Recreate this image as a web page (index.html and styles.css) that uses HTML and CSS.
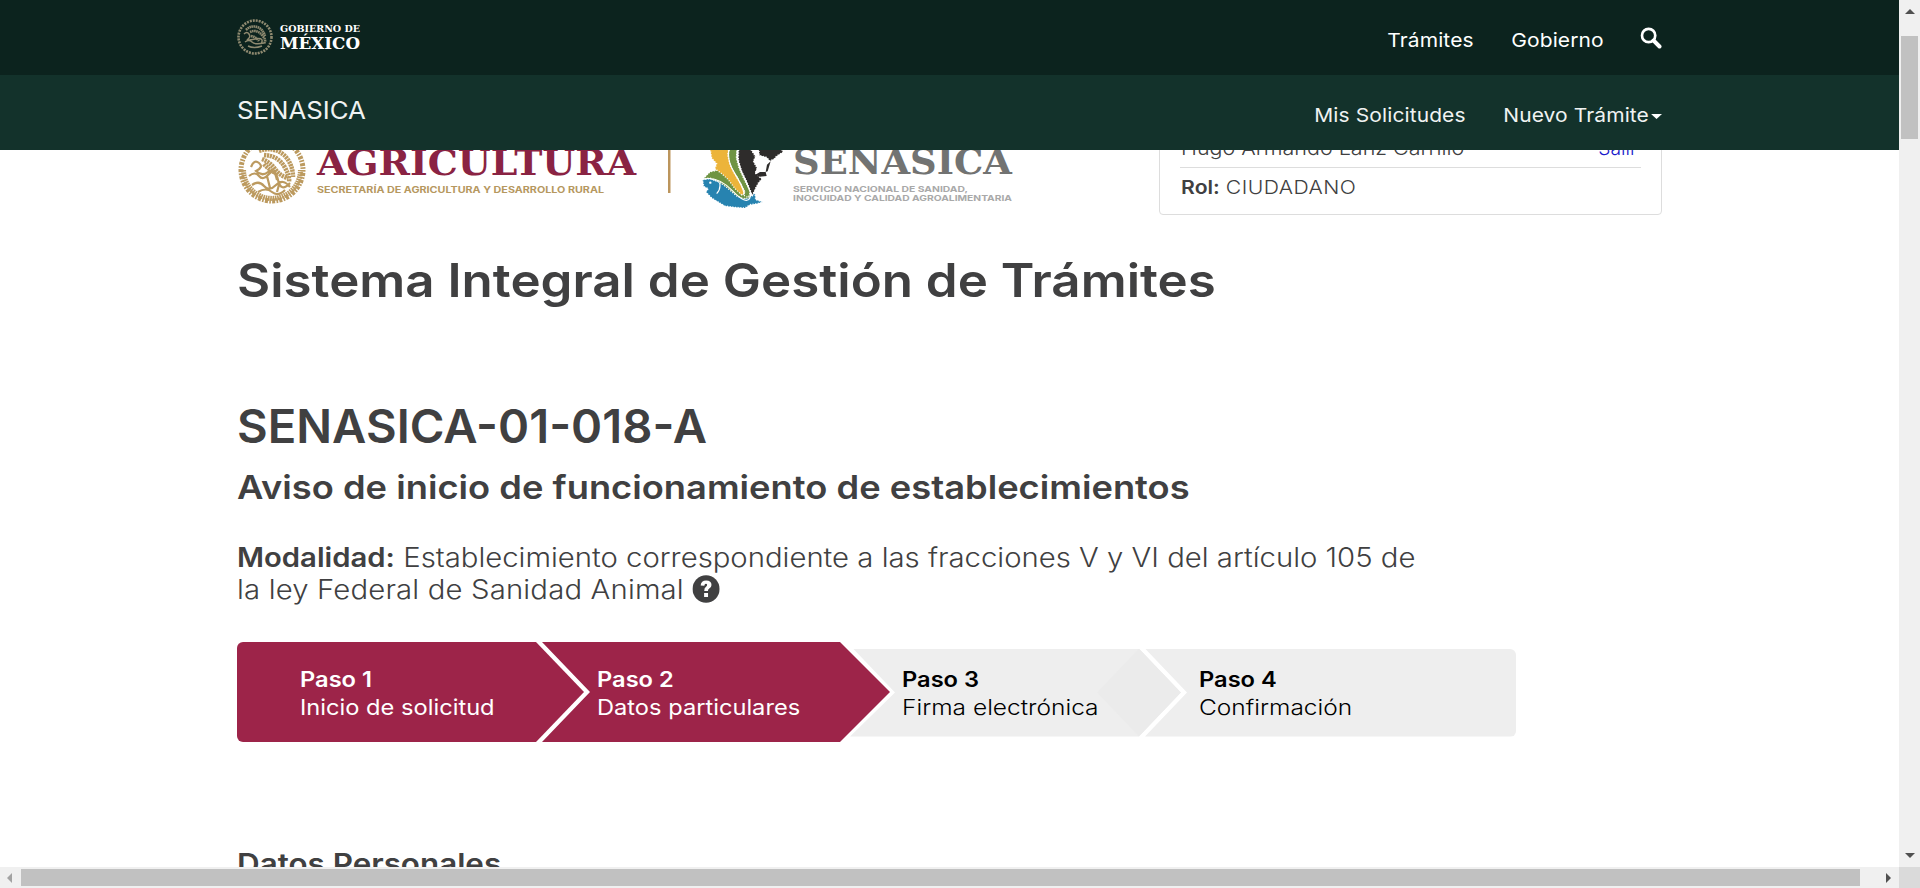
FILE: index.html
```
<!DOCTYPE html>
<html lang="es">
<head>
<meta charset="utf-8">
<title>Sistema Integral de Gestión de Trámites</title>
<link rel="stylesheet" href="styles.css">
</head>
<body>
<div class="window">
<div class="page">
  <header>
    <div class="bar bar-gob">
      <svg class="gob-logo" width="126" height="40" viewBox="0 0 126 40">
        <g fill="none" stroke="#8f8a70">
          <circle cx="18" cy="20" r="16.5" stroke-width="2.6" stroke-dasharray="2 1"/>
          <path stroke-width="2.6" stroke-dasharray="1.6 .5" d="M9 13q5-5 11-3t8 9M13 15q7-3 12 3t2 8M14 19q5 1 8 5"/>
          <path stroke-width="1.5" d="M7 17q3-3 5 0t-1 5 7 0 6 5M8 25q4-3 7 0t12 1M11 29q6 3 14 0"/>
        </g>
        <g class="serif" fill="#fff"><text x="43" y="15" font-size="9.6" textLength="80" lengthAdjust="spacingAndGlyphs">GOBIERNO DE</text>
        <text x="43" y="32" font-size="16.5" textLength="80" lengthAdjust="spacingAndGlyphs">MÉXICO</text></g>
      </svg>
      <nav><a>Trámites</a><a>Gobierno</a>
        <svg class="search" width="20" height="22" viewBox="0 0 22 22" preserveAspectRatio="none" fill="none" stroke="#fff"><circle cx="8.5" cy="8.500" r="6.700" stroke-width="2.700"/><path d="M13.500 13.500l6 6" stroke-width="4" stroke-linecap="round"/></svg></nav>
    </div>
    <div class="bar bar-app">
      <a class="brand">SENASICA</a>
      <nav><a>Mis Solicitudes</a><a>Nuevo Trámite<i class="caret"></i></a></nav>
    </div>
  </header>
  <main>
    <div class="top">
      <svg class="logos" width="790" height="90" viewBox="235 125 790 90">
        <g fill="none" stroke="#bc9a5f">
          <circle cx="272" cy="170" r="31" stroke-width="5" stroke-dasharray="1.6 1.3 3 1.200"/>
          <path stroke-width="6" stroke-dasharray="2 .8" d="M238.500 170a33.500 33.500 0 0 0 67 0" transform="translate(40.800 25.500) scale(.85)"/>
          <path stroke-width="4.500" stroke-dasharray="2.200 .7" d="M259 151q14-5 25 4 9 9 9 22M264 155q14 1 20 11t5 16M262 159q8 3 13 10t13 9M264 164q5 6 12 9"/>
          <path stroke-width="2.200" d="M251 167q3-8 8-4t-3 8q6 6 12 1t9 8M249 176q6-5 10 0t10-2 9 6 12 3M252 185q7-5 12 1t12-1 14 2M258 192q8-5 14 0t13-2M267 176l3 12M280 181l-3 11"/>
        </g>
        <g class="serif"><text x="317" y="175" font-size="35" fill="#8a2343" textLength="319" lengthAdjust="spacingAndGlyphs">AGRICULTURA</text>
        <text x="793" y="174" font-size="35" fill="#727372" textLength="219" lengthAdjust="spacingAndGlyphs">SENASICA</text></g>
        <g class="small"><text x="317" y="193" font-size="8.600" fill="#b6985f" textLength="287" lengthAdjust="spacingAndGlyphs">SECRETARÍA DE AGRICULTURA Y DESARROLLO RURAL</text>
        <text x="793" y="192" font-size="8.200" fill="#a9a9a9" textLength="175" lengthAdjust="spacingAndGlyphs">SERVICIO NACIONAL DE SANIDAD,</text>
        <text x="793" y="201" font-size="8.200" fill="#a9a9a9" textLength="219" lengthAdjust="spacingAndGlyphs">INOCUIDAD Y CALIDAD AGROALIMENTARIA</text></g>
        <path fill="#bc955c" d="M668 140h2.500v53h-2.500z"/>
        <g transform="translate(695 148) scale(.3333)" stroke="#fff" stroke-width="4" stroke-dasharray="3 5">
          <path fill="#2783b0" d="M23 95L45 92 60 98 80 106 100 120 125 140 150 152 165 148 180 136 182 155 203 162 185 167 165 170 150 180 120 178 90 174 70 162 50 150 33 132 40 122 26 115z"/>
          <path fill="#6f9443" d="M25 92L45 72 70 66 95 80 115 105 140 140 165 138 162 150 145 152 125 144 95 118 70 100 45 90z"/>
          <path fill="#6f9443" d="M105 0H127L124 30 132 60 150 100 167 130 160 148 146 142 148 128 128 90 110 65 95 35z"/>
          <path fill="#ecb43a" d="M45 0H102L98 20 105 50 120 80 140 112 150 135 140 141 120 122 100 95 80 77 60 62 65 47 50 30z"/>
          <path fill="#2e2c2b" d="M131 0H165L181 25 175 40 186 60 180 75 200 93 190 105 182 120 172 142 165 125 155 100 140 70 130 35z"/>
          <path fill="#2e2c2b" d="M191 0H258L264 12 245 24 238 32 225 39 215 28 193 22z"/>
          <path fill="#2e2c2b" stroke="none" d="M227 40L221 60 218 70 212 72 216 50zM180 81L195 72 212 72 215 84 195 86z"/>
          <path fill="none" stroke-width="3.500" stroke-dasharray="none" d="M103 0Q94 35 118 74T148 138M128 0Q120 30 146 86T166 140M25 93Q70 84 112 128T165 150M74 105q4 18-9 32"/>
          <circle cx="46" cy="104" r="3.500" fill="#fff" stroke="none"/>
        </g>
      </svg>
      <div class="user">
        <div class="user-name"><span>Hugo Armando Lanz Carrillo</span><a>Salir</a></div>
        <div class="user-role"><b>Rol:</b> <span>CIUDADANO</span></div>
      </div>
    </div>
    <h1>Sistema Integral de Gestión de Trámites</h1>
    <h2>SENASICA-01-018-A</h2>
    <h3>Aviso de inicio de funcionamiento de establecimientos</h3>
    <p class="mode"><b>Modalidad:</b> Establecimiento correspondiente a las fracciones V y VI del artículo 105 de<br><span class="line2">la ley Federal de Sanidad Animal</span>
      <svg class="help" width="25" height="28" viewBox="0 0 28 28" preserveAspectRatio="none"><circle cx="14" cy="14" r="13.700" fill="#404041"/><path d="M8.500 10.500q.4-5 5.600-5 5.400 0 5.400 4.500 0 2.400-2.300 3.600-1.300.8-1.300 2.400H12.100q0-3.200 1.900-4.300 1.100-.7 1.100-1.600 0-1.300-1.300-1.300t-1.600 2zM12 18h4v4h-4z" fill="#fff"/></svg></p>
    <div class="steps">
      <div class="step s1"><b>Paso 1</b><span>Inicio de solicitud</span></div>
      <div class="step s2"><b>Paso 2</b><span>Datos particulares</span></div>
      <div class="step s3"><b>Paso 3</b><span>Firma electrónica</span></div>
      <div class="step s4"><b>Paso 4</b><span>Confirmación</span></div>
    </div>
    <h4>Datos Personales</h4>
  </main>
</div>
<div class="vbar"><i class="up"></i><div class="vthumb"></div><i class="down"></i></div>
<div class="hbar"><i class="left"></i><div class="hthumb"></div><i class="right"></i></div>
<div class="corner"></div>
</div>
</body>
</html>
```
FILE: styles.css
```
* { box-sizing: border-box; }
body { margin: 0; font-family: Inter, "Open Sans", sans-serif; color: #404041; font-size: 19.25px; background: #fff; overflow: hidden; }
.window { display: grid; grid-template: 867px 21px / 1899px 21px; }
.page { overflow: hidden; display: flex; flex-direction: column; }
.bar { height: 75px; padding: 0 237px; display: flex; justify-content: space-between; }
.bar-gob { background: #0c231e; color: #fff; }
.bar-app { background: #13322b; color: #f0f3f2; }
.gob-logo { margin-top: 17px; }
nav { display: flex; gap: 34.5px; line-height: 80px; transform: scaleX(1.09); transform-origin: right; letter-spacing: .1px; }
.search { margin: 27px 0 0 -1px; }
.brand { font-size: 24.5px; line-height: 70px; transform: scaleX(1.053); transform-origin: left; }
.caret { display: inline-block; border: 5px solid transparent; border-top-color: #fff; border-bottom: 0; margin-left: 2px; vertical-align: 3px; }
.serif { font-family: "DejaVu Serif", serif; font-weight: 700; }
.small { font-family: Inter, sans-serif; font-weight: 700; }
main { flex: 1; min-height: 0; overflow: hidden; padding: 0 237px; }
.top { display: flex; justify-content: space-between; height: 65px; }
.logos { margin: -25px 0 0 -2px; }
.user { width: 503px; height: 90px; margin-top: -25px; border: 1px solid #ddd; border-radius: 4px; padding: 0 20px; font-weight: 300; }
.user-name { display: flex; justify-content: space-between; line-height: 45px; height: 42px; border-bottom: 1px solid #ddd; padding: 0 4px 0 1px; }
.user-name span { transform: scaleX(1.117); transform-origin: left; }
.user-name a { color: #1a1acb; }
.user-role { padding-left: 1px; line-height: 38px; transform: scaleX(1.1); transform-origin: left; }
.user-role span { letter-spacing: .4px; }
b { font-weight: 600; }
h1, h2, h3, h4, p { margin: 0; font-weight: 600; white-space: nowrap; transform-origin: left; }
h1 { margin-top: 35px; font-size: 46.5px; line-height: 60px; transform: scaleX(1.098); }
h2 { margin-top: 86px; font-size: 46.5px; line-height: 60px; transform: scaleX(1.015); }
h3 { margin-top: 11px; font-size: 33px; line-height: 40px; transform: scaleX(1.1); }
.mode { margin-top: 34px; font-size: 26.5px; line-height: 32px; font-weight: 300; transform: scaleX(1.105); }
.line2 { letter-spacing: .15px; }
.help { vertical-align: -4px; }
.steps { margin-top: 37px; height: 100px; display: flex; align-items: center; font-size: 21.5px; line-height: 28px; font-weight: 300; }
.step { display: flex; flex-direction: column; justify-content: center; align-items: flex-start; height: 100px; padding-top: 2px; white-space: nowrap; }
.step b, .step span { transform: scaleX(1.1); transform-origin: left; }
.s3 span, .s4 span { transform: scaleX(1.14); }
.s1 { width: 349px; padding-left: 63px; border-radius: 6px 0 0 6px; clip-path: polygon(0 0, 299px 0, 347px 50px, 299px 100px, 0 100px); }
.s2 { width: 350px; margin-left: -46px; padding-left: 57px; clip-path: polygon(2px 0, 300px 0, 350px 50px, 300px 100px, 2px 100px, 50px 50px); }
.s1, .s2 { background: #9d2449; color: #fff; font-weight: 400; }
.s3, .s4 { background: #eee; color: #000; height: 88px; padding-top: 0; margin-top: 1px; }
.s3 { width: 331px; margin-left: -40px; padding-left: 52px; isolation: isolate; clip-path: polygon(3px 0, 289px 0, 331px 44px, 289px 88px, 0 88px, 45px 44px); }
.s3::before { content: ""; position: absolute; z-index: -1; right: 0; top: 0; width: 84px; height: 88px; background: #ebebeb; clip-path: polygon(50% 0, 100% 50%, 50% 100%, 0 50%); }
.s3 { position: relative; }
.s4 { width: 375px; margin-left: -40px; padding-left: 58px; border-radius: 0 6px 6px 0; clip-path: polygon(4px 0, 375px 0, 375px 88px, 4px 88px, 46px 44px); }
h4 { margin-top: 102px; font-size: 28px; line-height: 40px; transform: scaleX(1.12); }
.vbar, .hbar { background: #f0f0f0; }
.vbar { display: flex; flex-direction: column; align-items: center; }
.vthumb { width: 17px; height: 103px; background: #c1c1c1; margin-top: 22px; }
.hbar { display: flex; align-items: center; }
.hthumb { height: 17px; width: 1839px; background: #c1c1c1; margin-left: 9px; }
.corner { background: #dadada; }
.up, .down { border: 5px solid transparent; }
.up { border-bottom-color: #505050; border-top: 0; margin-top: 9px; }
.down { border-top-color: #505050; border-bottom: 0; margin: auto 0 9px; }
.left, .right { border: 5px solid transparent; }
.left { border-right-color: #a3a3a3; border-left: 0; margin-left: 7px; }
.right { border-left-color: #505050; border-right: 0; margin: 0 8px 0 auto; }
```
